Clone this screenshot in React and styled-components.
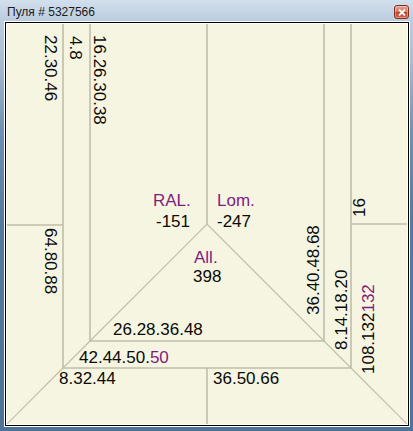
import React from "react";
import styled, { createGlobalStyle, css } from "styled-components";

const GlobalStyle = createGlobalStyle`
  html, body {
    margin: 0;
    padding: 0;
    width: 413px;
    height: 431px;
    overflow: hidden;
  }
  body {
    font-family: "Liberation Sans", Arial, sans-serif;
  }
`;

const Window = styled.div`
  width: 413px;
  height: 431px;
  display: flex;
  flex-direction: column;
  background: linear-gradient(
    to bottom,
    #d3dfec 0px,
    #bccde0 20px,
    #a9bdd3 60px,
    #6f91b3 130px,
    #557a9f 220px,
    #4d7399 100%
  );
`;

const TitleBar = styled.div`
  height: 21px;
  display: flex;
  align-items: center;
  justify-content: space-between;
  padding: 0 4px 0 7px;
  box-sizing: border-box;
`;

const Title = styled.span`
  font-family: "Liberation Sans", Arial, sans-serif;
  font-size: 12px;
  color: #1b1b1b;
  margin-top: 3px;
`;

const CloseButton = styled.div`
  width: 15px;
  height: 14px;
  margin-top: 3px;
  box-sizing: border-box;
  border: 1px solid #7d2f22;
  border-radius: 3px;
  background: linear-gradient(to bottom, #e7a594 0%, #d7775f 45%, #c2432a 55%, #d0654a 100%);
  display: flex;
  align-items: center;
  justify-content: center;
  box-shadow: inset 0 0 0 1px rgba(255, 255, 255, 0.35);
`;

const Frame = styled.div`
  margin: 0 3px 0 4px;
  border: 1px solid #ffffff;
`;

const FrameLine = styled.div`
  border: 1px solid #000000;
`;

const FrameInner = styled.div`
  border: 1px solid #ffffff;
`;

const Sheet = styled.div`
  position: relative;
  width: 400px;
  height: 400px;
  background: #f6f5e1;
  overflow: hidden;
`;

const Lines = styled.svg`
  position: absolute;
  left: 0;
  top: 0;
  width: 400px;
  height: 400px;
`;

const Label = styled.span`
  position: absolute;
  left: ${(p) => p.$x}px;
  top: ${(p) => p.$y}px;
  font-family: "Liberation Sans", Arial, sans-serif;
  font-size: 17px;
  line-height: 17px;
  white-space: nowrap;
  color: ${(p) => (p.$purple ? "#7e1d80" : "#0a0a0a")};
  transform-origin: 0 0;
  ${(p) =>
    p.$rot === "cw" &&
    css`
      transform: rotate(90deg);
    `}
  ${(p) =>
    p.$rot === "ccw" &&
    css`
      transform: rotate(-90deg);
    `}
`;

const Accent = styled.span`
  color: #7e1d80;
`;

// baseline -> top offset for 17px / line-height 1
const BASE = 14.4;

const flat = [
  { t: "26.28.36.48", x: 106, b: 311 },
  { t: "42.44.50.", a: "50", x: 72, b: 339 },
  { t: "8.32.44", x: 52, b: 360 },
  { t: "36.50.66", x: 206, b: 360 },
  { t: "RAL.", x: 146, b: 182, purple: true },
  { t: "-151", x: 149, b: 203 },
  { t: "Lom.", x: 210, b: 182, purple: true },
  { t: "-247", x: 210, b: 203 },
  { t: "All.", x: 187, b: 239, purple: true },
  { t: "398", x: 186, b: 258 },
];

// cw: xr = right edge of glyphs, y = start
const down = [
  { t: "22.30.46", xr: 50, y: 11 },
  { t: "4.8", xr: 75, y: 12 },
  { t: "16.26.30.38", xr: 99, y: 11 },
  { t: "64.80.88", xr: 50, y: 204 },
];

// ccw: xl = left edge of glyphs, y = bottom where text starts
const up = [
  { t: "16", xl: 346, y: 193 },
  { t: "36.40.48.68", xl: 300, y: 291 },
  { t: "8.14.18.20", xl: 328, y: 326 },
  { t: "108.132", a: "132", xl: 355, y: 350 },
];

const stroke = "#c0bea9";

const ScoreLines = () => (
  <Lines viewBox="0 0 400 400">
    <g stroke={stroke} strokeWidth="1.6" fill="none">
      <line x1="56" y1="0" x2="56" y2="344" />
      <line x1="344" y1="0" x2="344" y2="344" />
      <line x1="56" y1="344" x2="344" y2="344" />
      <line x1="83" y1="0" x2="83" y2="317" />
      <line x1="317" y1="0" x2="317" y2="317" />
      <line x1="83" y1="317" x2="317" y2="317" />
      <line x1="200" y1="0" x2="200" y2="200" />
      <line x1="200" y1="344" x2="200" y2="400" />
      <line x1="0" y1="201" x2="56" y2="201" />
      <line x1="344" y1="200" x2="400" y2="200" />
    </g>
    <g stroke={stroke} strokeWidth="1.1" fill="none">
      <polyline points="83,317 200,200 317,317" />
      <polyline points="0,400 56,344 83,317" />
      <polyline points="400,400 344,344 317,317" />
    </g>
  </Lines>
);

const App = () => (
  <>
    <GlobalStyle />
    <Window>
      <TitleBar>
        <Title>Пуля # 5327566</Title>
        <CloseButton>
          <svg width="8" height="7" viewBox="0 0 8 7">
            <path d="M1 0.5 L7 6.5 M7 0.5 L1 6.5" stroke="#ffffff" strokeWidth="1.8" />
          </svg>
        </CloseButton>
      </TitleBar>
      <Frame>
        <FrameLine>
          <FrameInner>
            <Sheet>
              <ScoreLines />
              {flat.map((l) => (
                <Label key={l.t + l.x + l.b} $x={l.x} $y={l.b - BASE} $purple={l.purple}>
                  {l.t}
                  {l.a && <Accent>{l.a}</Accent>}
                </Label>
              ))}
              {down.map((l) => (
                <Label key={l.t + l.y} $x={l.xr + 2.2} $y={l.y} $rot="cw">
                  {l.t}
                </Label>
              ))}
              {up.map((l) => (
                <Label key={l.t + l.y} $x={l.xl - 2.2} $y={l.y} $rot="ccw">
                  {l.t}
                  {l.a && <Accent>{l.a}</Accent>}
                </Label>
              ))}
            </Sheet>
          </FrameInner>
        </FrameLine>
      </Frame>
    </Window>
  </>
);

export default App;
